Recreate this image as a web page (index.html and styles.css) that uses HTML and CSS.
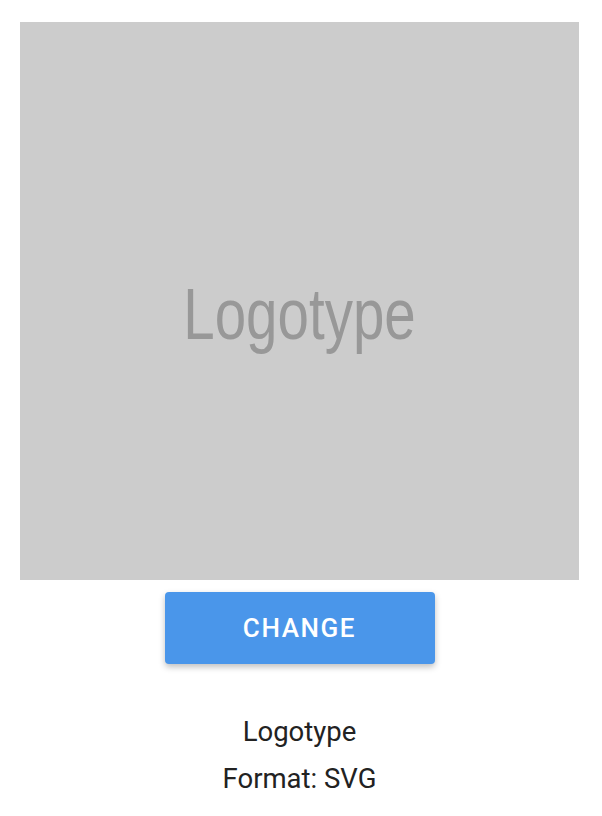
FILE: index.html
```html
<!DOCTYPE html>
<html>
<head>
<meta charset="utf-8">
<link rel="stylesheet" href="styles.css">
</head>
<body>
<div class="card">
  <div class="preview">
    <span class="preview-text">Logotype</span>
  </div>
  <button class="btn">CHANGE</button>
  <div class="info">
    <div class="info-line">Logotype</div>
    <div class="info-line">Format: SVG</div>
  </div>
</div>
</body>
</html>
```
FILE: styles.css
```css
html, body {
  margin: 0;
  padding: 0;
  background: #ffffff;
}
.card {
  width: 559px;
  margin: 22px 0 0 20px;
  display: flex;
  flex-direction: column;
  align-items: center;
  font-family: Roboto, "Liberation Sans", sans-serif;
}
.preview {
  width: 559px;
  height: 558px;
  background: #cccccc;
  display: flex;
  align-items: center;
  justify-content: center;
}
.preview-text {
  font-family: "Liberation Sans", Arial, sans-serif;
  font-size: 56.5px;
  color: #989898;
  transform: translateY(14px) scaleY(1.27);
  filter: blur(0.5px);
  line-height: 1;
}
.btn {
  margin-top: 12px;
  width: 270px;
  height: 72px;
  border: none;
  border-radius: 4px;
  background: #4a96ea;
  color: #ffffff;
  font-family: Roboto, sans-serif;
  font-weight: 500;
  font-size: 26px;
  letter-spacing: 1.6px;
  box-shadow: 0 3px 6px rgba(0,0,0,0.25);
  padding: 0;
}
.info {
  margin-top: 52px;
  display: flex;
  flex-direction: column;
  align-items: center;
  gap: 15px;
}
.info-line {
  font-size: 27.5px;
  line-height: 32px;
  color: #222222;
}
```
